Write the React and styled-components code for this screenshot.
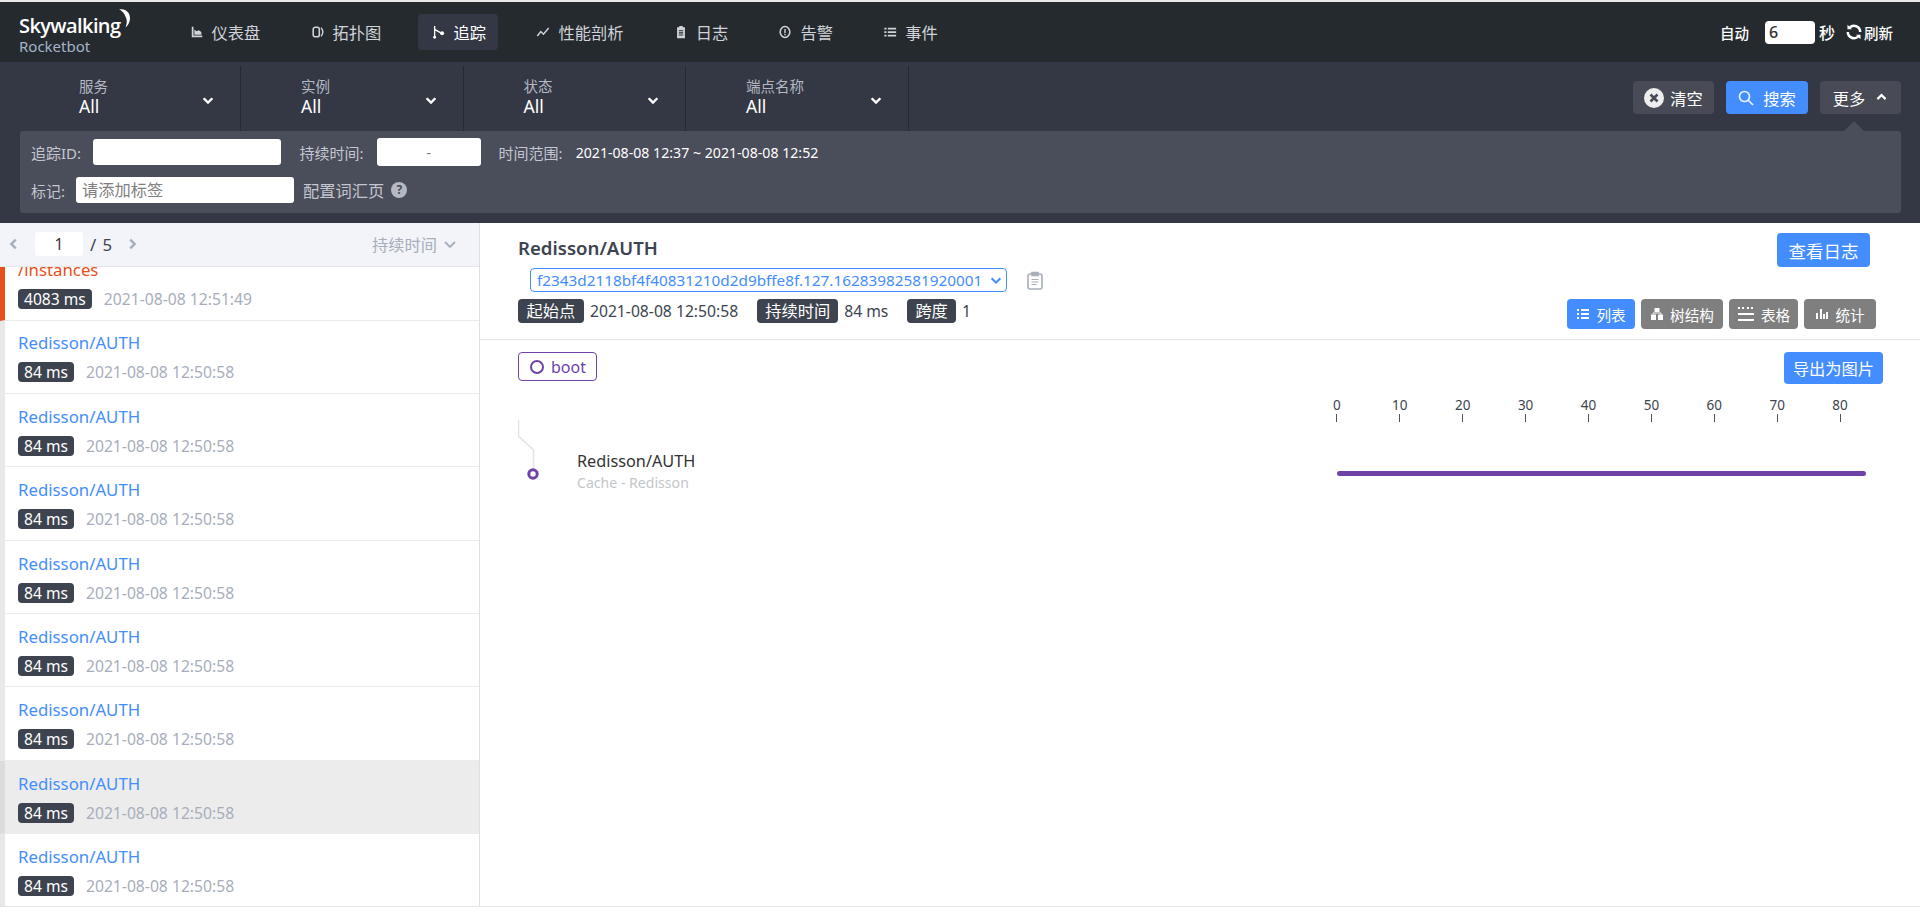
import React from "react";
import styled, { createGlobalStyle } from "styled-components";

const Global = createGlobalStyle`
  html, body { margin: 0; padding: 0; background: #fff; }
  body { font-family: "Noto Sans", "Noto Sans CJK SC", sans-serif; overflow: hidden; }
  * { box-sizing: border-box; }
`;

const Page = styled.div`
  height: 913px;
  width: 1920px;
  padding-top: 2px;
  background: #fff;
  display: flex;
  flex-direction: column;
  overflow: hidden;
  position: relative;
  &::before { content: ""; position: absolute; top: 0; left: 0; right: 0; height: 2px; background: #e8e8e8; }
`;

const Nav = styled.header`
  height: 60px;
  flex: none;
  background: #252a2f;
  display: flex;
  align-items: center;
  padding: 0 27px 0 19px;
  color: #fff;
`;
const Logo = styled.div`
  width: 156.5px;
  flex: none;
  display: flex;
  flex-direction: column;
  margin-top: 4px;
`;
const LogoMain = styled.div`
  display: flex;
  align-items: flex-start;
  font-family: "Open Sans", sans-serif;
  font-size: 20px;
  line-height: 24px;
  font-weight: 600;
  letter-spacing: -0.6px;
  color: #fff;
`;
const LogoSub = styled.div`
  font-size: 15px;
  line-height: 16px;
  color: #a3b3c7;
`;
const NavList = styled.nav`
  display: flex;
  gap: 24.3px;
  flex: 1;
`;
const NavItem = styled.a`
  height: 36px;
  padding: 0 12px 0 14px;
  display: flex;
  align-items: center;
  gap: 8px;
  border-radius: 4px;
  font-size: 16.25px;
  color: ${(p) => (p.$active ? "#fff" : "#d0d3d8")};
  background: ${(p) => (p.$active ? "#333844" : "transparent")};
`;
const NavRight = styled.div`
  display: flex;
  align-items: center;
  font-size: 14.5px;
  font-weight: 500;
`;
const AutoInput = styled.div`
  width: 50px;
  height: 23px;
  margin: 0 4px 0 16px;
  background: #fff;
  border-radius: 4px;
  color: #333;
  font-size: 16px;
  line-height: 23px;
  padding-left: 4px;
`;
const Sec = styled.span`
  font-size: 16px;
  margin-right: 10px;
`;

const FilterBar = styled.section`
  height: 161px;
  flex: none;
  background: #333844;
  padding: 4px 19px 0 20px;
  display: flex;
  flex-direction: column;
`;
const FilterTop = styled.div`
  display: flex;
  height: 65px;
  margin-left: -20px;
`;
const Select = styled.div`
  width: ${(p) => (p.$first ? 241 : 222.5)}px;
  flex: none;
  height: 65px;
  border-right: 1px solid #252a2f;
  padding: 11px 0 0 ${(p) => (p.$first ? 79 : 60)}px;
  position: relative;
  display: flex;
  flex-direction: column;
`;
const SelectLabel = styled.span`
  font-size: 14.5px;
  line-height: 19px;
  color: #b4b9c2;
`;
const SelectValue = styled.span`
  font-size: 17.5px;
  line-height: 20px;
  color: #fff;
`;
const SelectCaret = styled.span`
  position: absolute;
  right: 25px;
  top: 27px;
  color: #fff;
  display: flex;
`;
const Actions = styled.div`
  margin-left: auto;
  display: flex;
  gap: 12px;
  padding-top: 15px;
`;
const Action = styled.button`
  height: 33px;
  width: ${(p) => p.$w}px;
  border: 0;
  border-radius: 4px;
  background: ${(p) => (p.$primary ? "#448dfe" : "#484b55")};
  color: #fff;
  font: inherit;
  font-size: 16.25px;
  display: flex;
  align-items: center;
  justify-content: center;
  gap: ${(p) => p.$gap || 6}px;
  padding: 0;
`;
const MorePanel = styled.div`
  height: 82px;
  background: #4a4d5a;
  border-radius: 3px;
  padding: 6px 11px 0;
  position: relative;
  font-size: 15px;
  color: #c3c7cf;
  &::before {
    content: "";
    position: absolute;
    top: -10px;
    right: 37px;
    border: 10px solid transparent;
    border-top: 0;
    border-bottom-color: #4a4d5a;
  }
`;
const PanelRow = styled.div`
  display: flex;
  align-items: center;
  height: ${(p) => p.$h}px;
  margin-top: ${(p) => p.$mt || 0}px;
`;
const Field = styled.div`
  width: ${(p) => p.$w}px;
  height: ${(p) => p.$h}px;
  margin: ${(p) => p.$m};
  background: #fff;
  border-radius: 3px;
  color: #808080;
  font-size: ${(p) => p.$fs || 15}px;
  line-height: ${(p) => p.$h}px;
  text-align: ${(p) => p.$align || "left"};
  padding-left: ${(p) => p.$pl || 0}px;
`;
const RangeValue = styled.span`
  color: #fff;
  margin-left: 13px;
  font-size: 14.15px;
`;
const VocabLink = styled.span`
  font-size: 16.25px;
`;
const Help = styled.span`
  width: 16px;
  height: 16px;
  margin-left: 7px;
  border-radius: 50%;
  background: #b4b9c2;
  color: #4a4d5a;
  font-size: 12px;
  font-weight: 700;
  line-height: 16px;
  text-align: center;
`;

const Main = styled.main`
  height: 684px;
  flex: none;
  display: flex;
  border-bottom: 1px solid #e4e4e4;
`;
const Sidebar = styled.aside`
  width: 480px;
  flex: none;
  border-right: 1px solid #e0e0e0;
  display: flex;
  flex-direction: column;
  overflow: hidden;
`;
const ListHead = styled.div`
  height: 43.5px;
  flex: none;
  background: #f2f4f9;
  border-bottom: 1px solid #e4e6ea;
  display: flex;
  align-items: center;
  padding: 0 21px 0 7px;
  color: #a7aebb;
  font-size: 16.25px;
`;
const PageInput = styled.div`
  width: 48px;
  height: 24px;
  margin: 0 7px 0 14px;
  background: #fff;
  border-radius: 3px;
  color: #333;
  text-align: center;
  line-height: 24px;
  font-size: 15.6px;
`;
const PageTotal = styled.span`
  color: #3d444f;
  font-size: 16.8px;
  word-spacing: 2px;
  margin-right: 13px;
`;
const SortBy = styled.span`
  margin-left: auto;
  display: flex;
  align-items: center;
  gap: 5px;
`;
const TraceList = styled.div`
  flex: 1;
  overflow: hidden;
  display: flex;
  flex-direction: column;
`;
const TraceItem = styled.div`
  flex: none;
  height: ${(p) => p.$h || 73.4}px;
  border-left: 5px solid ${(p) => (p.$error ? "#e8501a" : p.$selected ? "#dcdcdc" : "#e8e8e8")};
  border-bottom: 1px solid #e9ebee;
  background: ${(p) => (p.$selected ? "#ececec" : "#fff")};
  padding: 0 0 10.5px 13px;
  display: flex;
  flex-direction: column;
  justify-content: flex-end;
  overflow: hidden;
`;
const TraceTitle = styled.div`
  font-size: 16.8px;
  line-height: 22px;
  color: ${(p) => (p.$error ? "#e8501a" : "#448dfe")};
  margin-bottom: 8px;
  white-space: nowrap;
`;
const TraceMeta = styled.div`
  display: flex;
  align-items: center;
  gap: 12px;
  height: 20px;
  color: #a7aebb;
  font-size: 15.7px;
`;
const Badge = styled.span`
  height: ${(p) => p.$h || 20}px;
  padding: 0 ${(p) => p.$px || 6}px;
  background: #3d444f;
  border-radius: 4px;
  color: #fff;
  font-size: ${(p) => p.$fs || 15.6}px;
  line-height: ${(p) => p.$h || 20}px;
  white-space: nowrap;
`;

const Detail = styled.section`
  flex: 1;
  min-width: 0;
  display: flex;
  flex-direction: column;
`;
const DetailHead = styled.div`
  height: 117px;
  flex: none;
  border-bottom: 1px solid #e6e6e6;
  padding: 10px 44px 0 38px;
  display: flex;
  justify-content: space-between;
`;
const HeadLeft = styled.div`
  display: flex;
  flex-direction: column;
`;
const HeadTitle = styled.h2`
  margin: 0;
  font-size: 18.6px;
  line-height: 30px;
  font-weight: 600;
  color: #3d444f;
`;
const IdRow = styled.div`
  display: flex;
  align-items: center;
  margin: 5px 0 7px 12px;
`;
const IdSelect = styled.div`
  width: 477px;
  height: 24px;
  border: 1px solid #448dfe;
  border-radius: 4px;
  color: #448dfe;
  font-size: 15.3px;
  line-height: 22px;
  padding: 0 3px 0 6px;
  display: flex;
  align-items: center;
  justify-content: space-between;
  white-space: nowrap;
`;
const ClipWrap = styled.span`
  margin-left: 20px;
  display: flex;
`;
const InfoRow = styled.div`
  display: flex;
  align-items: center;
  height: 24px;
  color: #3d444f;
  font-size: 15.7px;
`;
const InfoValue = styled.span`
  margin: 0 19px 0 6px;
`;
const HeadRight = styled.div`
  display: flex;
  flex-direction: column;
  align-items: flex-end;
`;
const LogButton = styled.button`
  width: 93px;
  height: 34px;
  margin-right: 6px;
  border: 0;
  border-radius: 4px;
  background: #448dfe;
  color: #fff;
  font: inherit;
  font-size: 17.5px;
  padding: 0;
`;
const ViewTabs = styled.div`
  display: flex;
  gap: 6px;
  margin-top: 32px;
`;
const ViewTab = styled.button`
  width: ${(p) => p.$w}px;
  height: 30px;
  border: 0;
  border-radius: 4px;
  background: ${(p) => (p.$active ? "#448dfe" : "#7f7f7f")};
  color: #fff;
  font: inherit;
  font-size: 14.6px;
  display: flex;
  align-items: center;
  justify-content: center;
  gap: 6px;
  padding: 0;
`;
const DetailBody = styled.div`
  padding: 12px 37px 0 38px;
`;
const BodyTop = styled.div`
  display: flex;
  justify-content: space-between;
  height: 32px;
`;
const ServiceTag = styled.div`
  width: 79px;
  height: 29px;
  border: 1px solid #6f42a8;
  border-radius: 4px;
  color: #6f42a8;
  font-size: 16px;
  display: flex;
  align-items: center;
  padding-left: 11px;
  gap: 7px;
`;
const ExportButton = styled.button`
  width: 99px;
  height: 32px;
  border: 0;
  border-radius: 4px;
  background: #448dfe;
  color: #fff;
  font: inherit;
  font-size: 16.25px;
  padding: 0;
`;
const Ruler = styled.div`
  display: flex;
  margin: 13px 0 0 787.5px;
`;
const Tick = styled.div`
  width: 62.9px;
  flex: none;
  display: flex;
  flex-direction: column;
  align-items: center;
  font-size: 13.5px;
  line-height: 16px;
  color: #3d444f;
  &::after { content: ""; width: 1px; height: 8px; background: #555; margin-top: 1px; }
`;
const SpanRow = styled.div`
  display: flex;
  margin-top: -2px;
`;
const TreeLine = styled.svg`
  width: 24px;
  height: 62px;
  flex: none;
  display: block;
`;
const SpanText = styled.div`
  width: 760px;
  margin-left: 35px;
  padding-top: 30px;
  flex: none;
`;
const SpanName = styled.div`
  font-size: 16.25px;
  line-height: 22px;
  color: #333;
`;
const SpanSub = styled.div`
  font-size: 14.1px;
  line-height: 22px;
  color: #c4c6c9;
`;
const SpanBar = styled.div`
  width: 529px;
  height: 5px;
  margin: 51px 0 0 -0.5px;
  flex: none;
  border-radius: 3px;
  background: #6f42a8;
`;

const Icon = ({ size = 14, children, fill = "currentColor", vb = "0 0 16 16" }) => (
  <svg width={size} height={size} viewBox={vb} fill={fill} style={{ flex: "none", display: "block" }}>{children}</svg>
);
const Chevron = ({ dir = "down", size = 14, w = 2.2, color = "currentColor" }) => {
  const d = { down: "M3 6l5 5 5-5", up: "M3 10l5-5 5 5", left: "M10 3L5 8l5 5", right: "M6 3l5 5-5 5" }[dir];
  return (
    <svg width={size} height={size} viewBox="0 0 16 16" fill="none" stroke={color} strokeWidth={w} style={{ flex: "none", display: "block" }}>
      <path d={d} />
    </svg>
  );
};

const navIcons = {
  dash: <Icon><path d="M2 2h2v10h10v2H2z" /><path d="M5 10V5l2.5 2L10 6l3 2v3H5z" /></Icon>,
  topo: <Icon><rect x="2.5" y="2.5" width="7" height="11" rx="2.5" fill="none" stroke="currentColor" strokeWidth="1.8" /><path d="M11.5 3a8 8 0 0 1 0 10" fill="none" stroke="currentColor" strokeWidth="1.6" /></Icon>,
  trace: <Icon><path d="M3 1v14M3 5l7 4" fill="none" stroke="currentColor" strokeWidth="1.5" /><circle cx="11.5" cy="9.5" r="2.3" /><circle cx="3" cy="14" r="1.6" /></Icon>,
  perf: <Icon><path d="M1.5 12.5l4-5 3 3 6-7" fill="none" stroke="currentColor" strokeWidth="1.7" /></Icon>,
  log: <Icon><path d="M6 1h4v1.5h2.5V15h-9V2.500H6z" /><path d="M5.500 6.500h5M5.500 9h5M5.500 11.500h5" stroke="#252a2f" strokeWidth="1.2" /></Icon>,
  alarm: <Icon><ellipse cx="8" cy="8" rx="5.500" ry="6.200" fill="none" stroke="currentColor" strokeWidth="1.8" /><path d="M7.200 4.500h1.600v4.500H7.200zM7.200 10h1.600v1.600H7.200z" /></Icon>,
  event: <Icon><path d="M1.500 3h2.500v2H1.500zM5.500 3h9.500v2H5.500zM1.500 7h2.500v2H1.500zM5.500 7h9.500v2H5.500zM1.500 11h2.500v2H1.500zM5.500 11h9.500v2H5.500z" /></Icon>,
};
const navItems = [
  ["dash", "仪表盘"], ["topo", "拓扑图"], ["trace", "追踪", true], ["perf", "性能剖析"],
  ["log", "日志"], ["alarm", "告警"], ["event", "事件"],
];
const selects = [["服务", "All"], ["实例", "All"], ["状态", "All"], ["端点名称", "All"]];
const ticks = [0, 10, 20, 30, 40, 50, 60, 70, 80];

const Trace = ({ selected }) => (
  <TraceItem $selected={selected}>
    <TraceTitle>Redisson/AUTH</TraceTitle>
    <TraceMeta><Badge>84 ms</Badge><span>2021-08-08 12:50:58</span></TraceMeta>
  </TraceItem>
);

export default function App() {
  return (
    <Page>
      <Global />
      <Nav>
        <Logo>
          <LogoMain>
            Skywalking
            <svg width="15" height="22" viewBox="0 0 14 20" style={{ marginTop: -6, marginLeft: -3 }}>
              <path d="M2 1c7-1 11 4 10 10-.5 3-2 5-4 7 1-3 2-6 0-10C7 5 5 3 2 1z" fill="#fff" />
            </svg>
          </LogoMain>
          <LogoSub>Rocketbot</LogoSub>
        </Logo>
        <NavList>
          {navItems.map(([ic, label, active]) => (
            <NavItem key={label} $active={active}>{navIcons[ic]}{label}</NavItem>
          ))}
        </NavList>
        <NavRight>
          <span>自动</span>
          <AutoInput>6</AutoInput>
          <Sec>秒</Sec>
          <svg width="18" height="18" viewBox="0 0 16 16" fill="none" stroke="#fff" strokeWidth="2.200" style={{ marginRight: 1 }}>
            <path d="M13.500 8A5.500 5.500 0 0 0 4 4.200M2.500 8A5.500 5.500 0 0 0 12 11.800" />
            <path d="M2.200 1.500v4h4zM13.800 14.500v-4h-4z" fill="#fff" stroke="none" />
          </svg>
          <span>刷新</span>
        </NavRight>
      </Nav>
      <FilterBar>
        <FilterTop>
          {selects.map(([l, v], i) => (
            <Select key={l} $first={i === 0}>
              <SelectLabel>{l}</SelectLabel>
              <SelectValue>{v}</SelectValue>
              <SelectCaret><Chevron w={2.800} size={14} /></SelectCaret>
            </Select>
          ))}
          <Actions>
            <Action $w={81}>
              <svg width="20" height="20" viewBox="0 0 20 20"><circle cx="10" cy="10" r="10" fill="#eee" /><path d="M6.500 6.500l7 7M13.500 6.500l-7 7" stroke="#484b55" strokeWidth="2.600" /></svg>
              清空
            </Action>
            <Action $primary $w={82} $gap={9}>
              <svg width="16" height="16" viewBox="0 0 16 16" fill="none" stroke="#e6f0ff" strokeWidth="1.700"><circle cx="6.500" cy="6.500" r="5" /><path d="M10 10l5 5" /></svg>
              搜索
            </Action>
            <Action $w={81} $gap={10}>更多<Chevron dir="up" w={2.800} size={13} /></Action>
          </Actions>
        </FilterTop>
        <MorePanel>
          <PanelRow $h={30}>
            <span>追踪ID:</span>
            <Field $w={188} $h={26} $m="0 18.5px 0 12px" />
            <span>持续时间:</span>
            <Field $w={104} $h={28} $m="0 18px 0 13px" $align="center">-</Field>
            <span>时间范围:</span>
            <RangeValue>2021-08-08 12:37 ~ 2021-08-08 12:52</RangeValue>
          </PanelRow>
          <PanelRow $h={26} $mt={10}>
            <span>标记:</span>
            <Field $w={218} $h={26} $m="0 9px 0 11px" $pl={6} $fs={16.25}>请添加标签</Field>
            <VocabLink>配置词汇页</VocabLink>
            <Help>?</Help>
          </PanelRow>
        </MorePanel>
      </FilterBar>
      <Main>
        <Sidebar>
          <ListHead>
            <Chevron dir="left" w={2.800} size={14} />
            <PageInput>1</PageInput>
            <PageTotal>/ 5</PageTotal>
            <Chevron dir="right" w={2.800} size={14} />
            <SortBy>持续时间<Chevron w={1.800} size={16} /></SortBy>
          </ListHead>
          <TraceList>
            <TraceItem $error $h={54}>
              <TraceTitle $error>/instances</TraceTitle>
              <TraceMeta><Badge>4083 ms</Badge><span>2021-08-08 12:51:49</span></TraceMeta>
            </TraceItem>
            <Trace /><Trace /><Trace /><Trace /><Trace /><Trace />
            <Trace selected />
            <Trace />
          </TraceList>
        </Sidebar>
        <Detail>
          <DetailHead>
            <HeadLeft>
              <HeadTitle>Redisson/AUTH</HeadTitle>
              <IdRow>
                <IdSelect>
                  f2343d2118bf4f40831210d2d9bffe8f.127.16283982581920001
                  <Chevron size={14} w={2.400} />
                </IdSelect>
                <ClipWrap>
                  <svg width="16" height="19" viewBox="0 0 16 19" fill="none" stroke="#a8afb9" strokeWidth="1.600">
                    <rect x="1" y="3" width="14" height="15" rx="2" />
                    <path d="M5 1.500h6v3H5z" fill="#a8afb9" />
                    <path d="M4.500 8.500h7M4.500 11h7M4.500 13.500h5" strokeWidth="1.200" />
                  </svg>
                </ClipWrap>
              </IdRow>
              <InfoRow>
                <Badge $h={24} $px={8.6} $fs={16.25}>起始点</Badge>
                <InfoValue>2021-08-08 12:50:58</InfoValue>
                <Badge $h={24} $px={8} $fs={16.25}>持续时间</Badge>
                <InfoValue>84 ms</InfoValue>
                <Badge $h={24} $px={8} $fs={16.25}>跨度</Badge>
                <InfoValue>1</InfoValue>
              </InfoRow>
            </HeadLeft>
            <HeadRight>
              <LogButton>查看日志</LogButton>
              <ViewTabs>
                <ViewTab $active $w={68}>
                  <Icon size={14} vb="0 0 14 14"><path d="M1 2h2v2H1zM5 2h8v2H5zM1 6h2v2H1zM5 6h8v2H5zM1 10h2v2H1zM5 10h8v2H5z" /></Icon>
                  列表
                </ViewTab>
                <ViewTab $w={82}>
                  <Icon size={14} vb="0 0 14 14"><path d="M4.500 1h5v4h-5zM1 7.500h5V13H1zM8 7.500h5V13H8z" /><path d="M3 7.500V6h8v1.500" fill="none" stroke="currentColor" /></Icon>
                  树结构
                </ViewTab>
                <ViewTab $w={69}>
                  <Icon size={18} vb="0 0 18 18"><path d="M1 2h2v2H1zM5 2h2v2H5zM10 2h2v2h-2zM14 2h2v2h-2zM1 8h16v2H1zM1 14h16v2H1z" /></Icon>
                  表格
                </ViewTab>
                <ViewTab $w={72}>
                  <Icon size={14} vb="0 0 14 14"><path d="M1 6h2v6H1zM5 2h2v10H5zM8 7h2v5H8zM11 5h2v7h-2z" /></Icon>
                  统计
                </ViewTab>
              </ViewTabs>
            </HeadRight>
          </DetailHead>
          <DetailBody>
            <BodyTop>
              <ServiceTag>
                <svg width="14" height="14" viewBox="0 0 14 14" fill="none" stroke="#6f42a8" strokeWidth="2"><circle cx="7" cy="7" r="6" /></svg>
                boot
              </ServiceTag>
              <ExportButton>导出为图片</ExportButton>
            </BodyTop>
            <Ruler>
              {ticks.map((t) => <Tick key={t}>{t}</Tick>)}
            </Ruler>
            <SpanRow>
              <TreeLine viewBox="0 0 24 62" fill="none">
                <path d="M0.500 0v16l15 14v20" stroke="#e4e4e4" strokeWidth="1.600" />
                <circle cx="15" cy="54" r="4.200" fill="#fff" stroke="#6f42a8" strokeWidth="3" />
              </TreeLine>
              <SpanText>
                <SpanName>Redisson/AUTH</SpanName>
                <SpanSub>Cache - Redisson</SpanSub>
              </SpanText>
              <SpanBar />
            </SpanRow>
          </DetailBody>
        </Detail>
      </Main>
    </Page>
  );
}
